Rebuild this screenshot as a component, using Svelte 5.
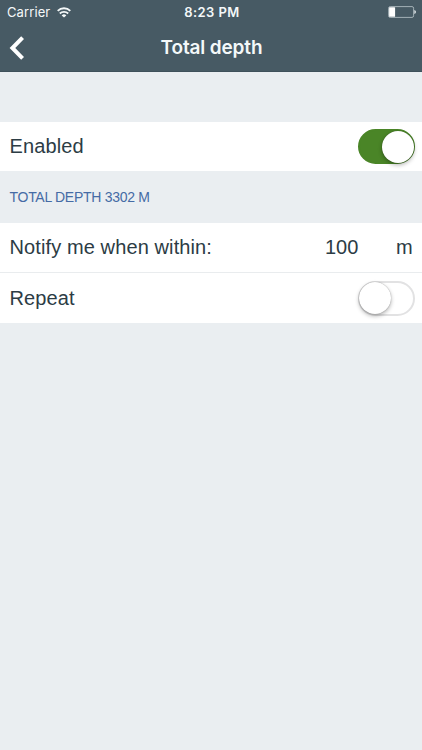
<script>
  let enabled = $state(true);
  let repeat = $state(false);
</script>

{#snippet toggle(on, flip, label)}
  <button class="switch" class:on role="switch" aria-checked={on} aria-label={label} onclick={flip}>
    <span class="knob"></span>
  </button>
{/snippet}

<div class="screen">
  <header>
    <div class="status">
      <div class="carrier">
        <span>Carrier</span>
        <svg width="14" height="11" viewBox="0 0 14 11" fill="none" stroke="#f4f8f9" stroke-width="1.8">
          <path d="M0.7 3.8 A9 9 0 0 1 13.3 3.8" />
          <path d="M2.8 6.5 A6 6 0 0 1 11.2 6.5" />
          <path d="M7 10.6 L4.7 8.4 A3.3 3.3 0 0 1 9.3 8.4 Z" fill="#f4f8f9" stroke="none" />
        </svg>
      </div>
      <span class="time">8:23 PM</span>
      <svg class="battery" width="28" height="12" viewBox="0 0 28 12">
        <rect x="0.6" y="0.6" width="25" height="10.8" rx="1.6" fill="none" stroke="#a4b1b7" stroke-width="1" />
        <rect x="1.1" y="1.2" width="6" height="9.6" rx="0.6" fill="#fff" />
        <path d="M26.3 4 Q28 4.5 28 6 Q28 7.5 26.3 8 Z" fill="#dce3e6" />
      </svg>
    </div>
    <div class="nav">
      <svg class="back" width="16" height="24" viewBox="0 0 16 24" fill="none" stroke="#fff" stroke-width="4">
        <path d="M14.6 1.6 L4.4 12 L14.6 22.4" />
      </svg>
      <h1>Total depth</h1>
    </div>
  </header>

  <main>
    <div class="row first">
      <span class="label enabled">Enabled</span>
      {@render toggle(enabled, () => (enabled = !enabled), 'Enabled')}
    </div>
    <h2><span>TOTAL DEPTH 3302 M</span></h2>
    <div class="row divided">
      <span class="label notify">Notify me when within:</span>
      <span class="value">100</span>
      <span class="unit">m</span>
    </div>
    <div class="row last">
      <span class="label repeat">Repeat</span>
      {@render toggle(repeat, () => (repeat = !repeat), 'Repeat')}
    </div>
  </main>
</div>

<style>
  :global(body) { margin: 0; }
  .screen {
    width: 422px;
    height: 750px;
    overflow: hidden;
    background: #eaeef1;
    color: #2c3c45;
    font-family: "Liberation Sans", Arial, sans-serif;
  }
  header {
    box-sizing: border-box;
    height: 72px;
    background: #475a64;
    border-bottom: 1px solid #3f515b;
    color: #f4f8f9;
    font-family: Inter, "Liberation Sans", sans-serif;
  }
  .status {
    display: grid;
    grid-template-columns: 1fr auto 1fr;
    align-items: center;
    height: 24px;
    padding: 0 6px 0 7px;
    font-size: 13px;
    line-height: 24px;
  }
  .carrier { display: flex; align-items: center; gap: 6.5px; letter-spacing: 0.1px; }
  .time { padding-left: 1px; font-weight: 600; letter-spacing: 0.4px; }
  .battery { justify-self: end; }
  .nav {
    display: grid;
    grid-template-columns: 1fr auto 1fr;
    align-items: center;
    height: 47px;
    padding: 0 8px;
  }
  h1 { margin: 0; padding-left: 1px; font-size: 19px; font-weight: 600; line-height: 47px; letter-spacing: -0.15px; }
  main { padding-top: 50px; }
  .row {
    display: flex;
    align-items: center;
    box-sizing: border-box;
    height: 49px;
    padding: 0 7px 0 9.5px;
    background: #fff;
    font-size: 20px;
  }
  .divided { height: 50px; border-bottom: 1px solid #e9ecee; }
  .last { height: 50px; }
  .label { flex: 1; white-space: nowrap; letter-spacing: 0.11px; }
  .value { width: 71px; }
  .unit { width: 19px; }
  h2 {
    margin: 0;
    height: 52px;
    padding-left: 9.5px;
    font-size: 14px;
    font-weight: 400;
    line-height: 52px;
    letter-spacing: -0.28px;
    color: #456ba5;
  }
  .switch {
    display: flex;
    box-sizing: border-box;
    width: 57px;
    height: 35px;
    padding: 0;
    border: 2px solid #e2e2e3;
    border-radius: 18px;
    background: #fff;
  }
  .switch.on { justify-content: flex-end; border-color: #4a8527; background: #4a8527; }
  .knob {
    flex: none;
    width: 32px;
    height: 32px;
    margin: -0.5px -1px 0;
    border-radius: 50%;
    background: #fff;
    box-shadow: 0 2px 4px rgba(0, 0, 0, 0.3), 0 0 1px rgba(0, 0, 0, 0.4);
  }
  .on .knob { margin-right: -0.5px; }
</style>
